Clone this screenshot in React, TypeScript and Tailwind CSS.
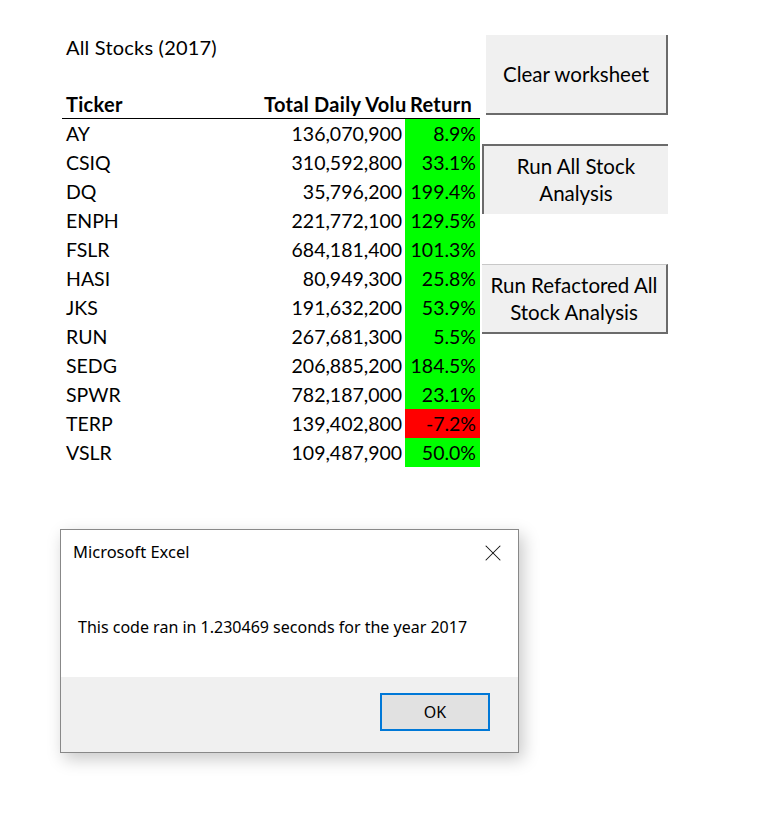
import { X } from 'lucide-react'

type Row = { ticker: string; volume: string; ret: string; up: boolean }

const rows: Row[] = [
  { ticker: 'AY', volume: '136,070,900', ret: '8.9%', up: true },
  { ticker: 'CSIQ', volume: '310,592,800', ret: '33.1%', up: true },
  { ticker: 'DQ', volume: '35,796,200', ret: '199.4%', up: true },
  { ticker: 'ENPH', volume: '221,772,100', ret: '129.5%', up: true },
  { ticker: 'FSLR', volume: '684,181,400', ret: '101.3%', up: true },
  { ticker: 'HASI', volume: '80,949,300', ret: '25.8%', up: true },
  { ticker: 'JKS', volume: '191,632,200', ret: '53.9%', up: true },
  { ticker: 'RUN', volume: '267,681,300', ret: '5.5%', up: true },
  { ticker: 'SEDG', volume: '206,885,200', ret: '184.5%', up: true },
  { ticker: 'SPWR', volume: '782,187,000', ret: '23.1%', up: true },
  { ticker: 'TERP', volume: '139,402,800', ret: '-7.2%', up: false },
  { ticker: 'VSLR', volume: '109,487,900', ret: '50.0%', up: true },
]

function StockTable() {
  return (
    <div className="w-[418px] pt-[32px] text-[19.5px] text-black">
      <div className="h-[29px] flex items-center pl-1 text-[20px] tracking-[0.2px]">All Stocks (2017)</div>
      <div className="h-[29px]" />
      <div className="h-[29px] flex items-center font-bold text-[20px] tracking-[0.3px] border-b border-black">
        <div className="w-[202px] pl-1">Ticker</div>
        <div className="w-[142px] -mr-[1px] text-right whitespace-nowrap">Total Daily Volu</div>
        <div className="w-[75px] pl-[5px]">Return</div>
      </div>
      {rows.map((r) => (
        <div key={r.ticker} className="h-[29px] flex items-stretch">
          <div className="w-[202px] pl-1 flex items-center">{r.ticker}</div>
          <div className="w-[141px] pr-[2px] flex items-center justify-end">{r.volume}</div>
          <div
            className={
              r.up
                ? 'w-[75px] ml-px pr-[4px] flex items-center justify-end bg-[#00ff00]'
                : 'w-[75px] ml-px pr-[4px] flex items-center justify-end bg-[#ff0000]'
            }
          >
            {r.ret}
          </div>
        </div>
      ))}
    </div>
  )
}

function SheetButtons() {
  return (
    <div className="flex flex-col pt-[35px] text-[20.5px] text-black leading-[27px]">
      <button className="ml-[4px] w-[182px] h-[80px] bg-[#f0f0f0] border-r-2 border-b-2 border-[#6b6b6b]">
        Clear worksheet
      </button>
      <button className="mt-[29px] w-[186px] h-[70px] bg-[#f0f0f0] border-l-2 border-t-2 border-[#6b6b6b]">
        Run All Stock
        <br />
        Analysis
      </button>
      <button className="mt-[50px] w-[186px] h-[70px] bg-[#f0f0f0] border-t border-[#c8c8c8] border-r-2 border-b-2 border-r-[#6b6b6b] border-b-[#6b6b6b]">
        Run Refactored All
        <br />
        Stock Analysis
      </button>
    </div>
  )
}

function MessageBox() {
  return (
    <div className="absolute left-[60px] top-[529px] w-[459px] h-[224px] bg-white border border-[#888888] shadow-[4px_6px_16px_rgba(0,0,0,0.22)] flex flex-col font-['Noto_Sans',sans-serif] text-[16px] text-black">
      <div className="h-[147px] flex flex-col">
        <div className="h-[45px] flex items-center justify-between pl-[12px] pr-[11px]">
          <span className="text-[16.5px]">Microsoft Excel</span>
          <X size={28} strokeWidth={0.9} className="text-[#111]" />
        </div>
        <div className="pl-[17px] pt-[40px]">This code ran in 1.230469 seconds for the year 2017</div>
      </div>
      <div className="flex-1 bg-[#f0f0f0] flex justify-end items-start pt-[16px] pr-[28px]">
        <button className="w-[110px] h-[38px] bg-[#e1e1e1] border-2 border-[#0078d7] text-[16px]">OK</button>
      </div>
    </div>
  )
}

export default function App() {
  return (
    <div className="relative w-[763px] h-[828px] bg-white font-['Lato',sans-serif]">
      <div className="flex pl-[62px] gap-[2px]">
        <StockTable />
        <SheetButtons />
      </div>
      <MessageBox />
    </div>
  )
}
